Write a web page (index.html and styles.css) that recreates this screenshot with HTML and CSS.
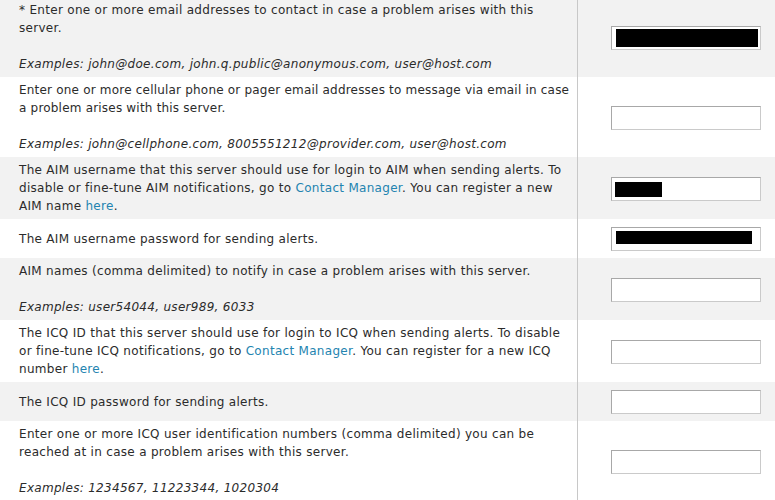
FILE: index.html
```html
<!DOCTYPE html>
<html lang="en">
<head>
  <meta charset="UTF-8">
  <title>Alert Settings</title>
  <link rel="stylesheet" href="styles.css">
</head>
<body>
  <table class="settings">
    <tr class="alt">
      <td class="desc">* Enter one or more email addresses to contact in case a problem arises with this server.<br><br><em>Examples: john@doe.com, john.q.public@anonymous.com, user@host.com</em></td>
      <td class="val"><span class="box"><input type="text"><span class="mask mask-full"></span></span></td>
    </tr>
    <tr>
      <td class="desc"><span class="tight">Enter one or more cellular phone or pager email addresses to message via email in case a problem arises with this server.</span><br><br><em>Examples: john@cellphone.com, 8005551212@provider.com, user@host.com</em></td>
      <td class="val"><span class="box"><input type="text"></span></td>
    </tr>
    <tr class="alt">
      <td class="desc">The AIM username that this server should use for login to AIM when sending alerts. To disable or fine-tune AIM notifications, go to <a href="#">Contact Manager</a>. You can register a new AIM name <a href="#">here</a>.</td>
      <td class="val"><span class="box"><input type="text"><span class="mask mask-short"></span></span></td>
    </tr>
    <tr>
      <td class="desc">The AIM username password for sending alerts.</td>
      <td class="val"><span class="box"><input type="password"><span class="mask mask-pass"></span></span></td>
    </tr>
    <tr class="alt">
      <td class="desc">AIM names (comma delimited) to notify in case a problem arises with this server.<br><br><em>Examples: user54044, user989, 6033</em></td>
      <td class="val"><span class="box"><input type="text"></span></td>
    </tr>
    <tr>
      <td class="desc">The ICQ ID that this server should use for login to ICQ when sending alerts. To disable or fine-tune ICQ notifications, go to <a href="#">Contact Manager</a>. You can register for a new ICQ number <a href="#">here</a>.</td>
      <td class="val"><span class="box"><input type="text"></span></td>
    </tr>
    <tr class="alt">
      <td class="desc">The ICQ ID password for sending alerts.</td>
      <td class="val"><span class="box"><input type="password"></span></td>
    </tr>
    <tr>
      <td class="desc">Enter one or more ICQ user identification numbers (comma delimited) you can be reached at in case a problem arises with this server.<br><br><em>Examples: 1234567, 11223344, 1020304</em></td>
      <td class="val"><span class="box"><input type="text"></span></td>
    </tr>
  </table>
</body>
</html>
```

FILE: styles.css
```css
body { margin: 0; padding: 0; background: #fff; font-family: "DejaVu Sans", Verdana, sans-serif; font-size: 12px; letter-spacing: 0.3px; color: #2b2b2b; overflow: hidden; }
.settings { border-collapse: collapse; width: 800px; margin-top: -3px; }
.settings td { padding: 0; }
.settings tr.alt { background: #f2f2f2; }
.desc { width: 555px; padding: 4px 3px 4px 19px !important; line-height: 18px; vertical-align: middle; border-right: 1px solid #c8c8c8; }
.desc em { font-style: italic; }
.desc a { color: #2384b0; text-decoration: none; }
.tight { letter-spacing: 0.2px; }
.val { padding: 8px 0 7px 33px !important; vertical-align: middle; }
.box { position: relative; display: inline-block; width: 150px; height: 24px; vertical-align: middle; }
.box input { box-sizing: border-box; width: 150px; height: 24px; margin: 0; padding: 2px 4px; border: 1px solid #a8a8a8; border-right-color: #cacaca; border-bottom-color: #cacaca; background: #fff; font: 12px "DejaVu Sans", sans-serif; outline: none; }
.mask { position: absolute; background: #000; }
.mask-full { left: 5px; top: 3px; width: 142px; height: 18px; }
.mask-short { left: 4px; top: 5px; width: 47px; height: 15px; }
.mask-pass { left: 5px; top: 4px; width: 136px; height: 13px; }
```
